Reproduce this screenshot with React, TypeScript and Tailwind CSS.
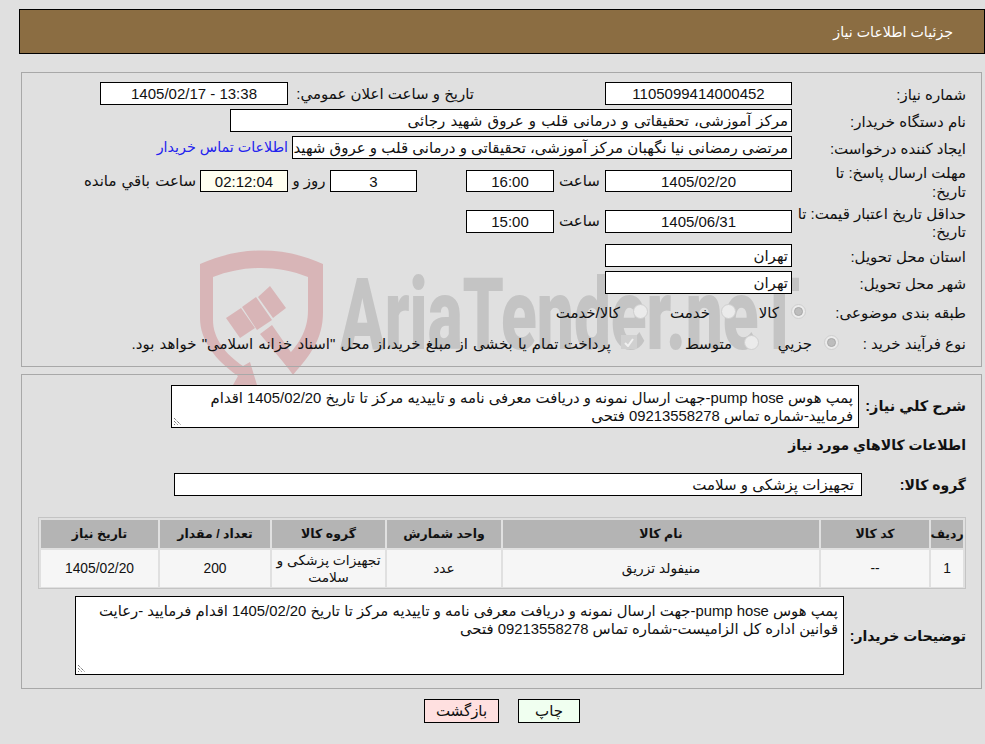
const font = "[font-family:'Liberation_Sans','DejaVu_Sans',sans-serif]";

const Field = ({
  width,
  height = "h-[23px]",
  align = "text-center",
  bg = "bg-white",
  children,
}: {
  width: string;
  height?: string;
  align?: string;
  bg?: string;
  children?: React.ReactNode;
}) => (
  <div
    className={`${width} ${height} ${align} ${bg} shrink-0 border border-black px-[3px] leading-[21px] overflow-hidden whitespace-nowrap`}
  >
    {children}
  </div>
);

const Label = ({ children }: { children: React.ReactNode }) => (
  <div className="w-[174px] shrink-0 leading-[21px] pt-[2px]">{children}</div>
);

const Radio = ({ checked = false }: { checked?: boolean }) => (
  <span className="w-[15px] h-[15px] mb-[4px] rounded-full bg-[#ebebeb] border border-[#cfcfcf] flex items-center justify-center shrink-0">
    {checked && <span className="w-[9px] h-[9px] rounded-full bg-[#bdbdbd] border border-[#a8a8a8]" />}
  </span>
);

const Grip = () => (
  <svg className="absolute left-[1px] bottom-[1px]" width="10" height="10" viewBox="0 0 10 10">
    <path d="M1 2 L8 9 M1 5 L5 9 M1 8 L2 9" stroke="#444" strokeWidth="1" strokeDasharray="1 1" />
  </svg>
);

const Watermark = () => (
  <div className="absolute left-[200px] top-[250px] w-[620px] h-[140px] pointer-events-none" dir="ltr">
    <svg className="absolute left-0 top-0" width="126" height="140" viewBox="0 0 126 140">
      <path
        d="M0 14 C40 -4 84 -4 123 14 L123 62 C123 90 110 105 93 125 L83 111 C98 95 108 82 108 60 L108 27 C78 15 44 15 13 27 L13 70 C13 88 25 104 43 116 L50 112 L57 135 L33 135 L38 126 C15 110 0 90 0 68 Z"
        fill="#d8b5b7"
      />
      <path
        d="M26 68 L41 58 L55 78 L40 88 Z M42 57 L56 47 L72 70 L57 80 Z M58 47 L70 36 L86 58 L73 68 Z M60 84 L72 75 L95 108 L88 118 Z"
        fill="#d8b5b7"
      />
    </svg>
    <div className="absolute left-[140px] top-[10px] text-[101px] leading-[110px] font-black text-[#c4c4c4] whitespace-nowrap [font-family:'Roboto',sans-serif] scale-x-[0.65] origin-left">
      AriaTender.neT
    </div>
  </div>
);

export default function App() {
  return (
    <div
      dir="rtl"
      className={`${font} relative w-[985px] h-[744px] overflow-hidden bg-[#e0e0e0] text-[15px] text-[#111] pt-[9px] pl-[19px]`}
    >
      <Watermark />
      {/* header */}
      <div className="relative h-[45px] bg-[#8b6d42] border border-black text-white text-[14.2px] pr-[31px] leading-[44px]">
        جزئیات اطلاعات نیاز
      </div>

      {/* top panel */}
      <div className="relative mt-[18px] ml-[2px] mr-[3px] h-[295px] border border-[#a8a8a8] pt-[9px] pr-[15px]">
        <div className="flex h-[23px] items-center">
          <Label>شماره نیاز:</Label>
          <Field width="w-[187px]">1105099414000452</Field>
          <div className="w-[317px] pr-[131px] pt-[2px] whitespace-nowrap">تاریخ و ساعت اعلان عمومي:</div>
          <Field width="w-[188px]">13:38 - 1405/02/17</Field>
        </div>
        <div className="flex h-[23px] items-center mt-[4px]">
          <Label>نام دستگاه خریدار:</Label>
          <Field width="w-[562px]" align="text-right">
            <span className="[word-spacing:1px]">مرکز آموزشی، تحقیقاتی و درمانی قلب و عروق شهید رجائی</span>
          </Field>
        </div>
        <div className="flex h-[23px] items-center mt-[4px]">
          <Label>ایجاد کننده درخواست:</Label>
          <Field width="w-[500px]" align="text-right">مرتضی رمضانی نیا نگهبان مرکز آموزشی، تحقیقاتی و درمانی قلب و عروق شهید</Field>
          <a className="mr-[4px] text-[14.3px] text-[#2222ee] whitespace-nowrap">اطلاعات تماس خریدار</a>
        </div>
        <div className="flex h-[36px] items-start mt-[11px]">
          <div className="w-[174px] shrink-0 leading-[19px] -mt-[7px]">
            مهلت ارسال پاسخ: تا
            <br />
            تاریخ:
          </div>
          <Field width="w-[187px]" height="h-[22px]">1405/02/20</Field>
          <div className="w-[51px] text-center leading-[22px]">ساعت</div>
          <Field width="w-[88px]" height="h-[22px]">16:00</Field>
          <div className="w-[49px]" />
          <Field width="w-[87px]" height="h-[22px]">3</Field>
          <div className="w-[42px] text-center leading-[22px]">روز و</div>
          <Field width="w-[88px]" height="h-[22px]" bg="bg-[#fffff0]">02:12:04</Field>
          <div className="mr-[4px] leading-[22px] whitespace-nowrap [word-spacing:1px]">ساعت باقي مانده</div>
        </div>
        <div className="flex h-[36px] items-start mt-[4px]">
          <div className="w-[174px] shrink-0 leading-[18px] -mt-[5px] whitespace-nowrap">
            حداقل تاریخ اعتبار قیمت: تا
            <br />
            تاریخ:
          </div>
          <Field width="w-[187px]">1405/06/31</Field>
          <div className="w-[51px] text-center leading-[22px]">ساعت</div>
          <Field width="w-[88px]">15:00</Field>
        </div>
        <div className="flex h-[23px] items-center mt-[-2px]">
          <Label>استان محل تحویل:</Label>
          <Field width="w-[187px]" align="text-right">تهران</Field>
        </div>
        <div className="flex h-[23px] items-center mt-[4px]">
          <Label>شهر محل تحویل:</Label>
          <Field width="w-[187px]" align="text-right">تهران</Field>
        </div>
        <div className="flex h-[22px] items-center mt-[8px]">
          <div className="w-[160px] shrink-0 whitespace-nowrap">طبقه بندی موضوعی:</div>
          <div className="flex items-center w-[70px] gap-[12px]"><Radio checked /><span>کالا</span></div>
          <div className="flex items-center w-[88px] gap-[11px]"><Radio /><span>خدمت</span></div>
          <div className="flex items-center gap-[13px]"><Radio /><span>کالا/خدمت</span></div>
        </div>
        <div className="flex h-[22px] items-center mt-[9px]">
          <div className="w-[127px] shrink-0 whitespace-nowrap">نوع فرآیند خرید :</div>
          <div className="flex items-center w-[80px] gap-[12px]"><Radio checked /><span>جزیي</span></div>
          <div className="flex items-center w-[122px] gap-[12px]"><Radio /><span>متوسط</span></div>
          <div className="flex items-center gap-[10px] whitespace-nowrap">
            <span className="w-[16px] h-[14px] mb-[4px] bg-[#d0d0d0] flex items-center justify-center">
              <svg width="10" height="9" viewBox="0 0 10 9">
                <path d="M1 5 L4 8 L9 1" fill="none" stroke="#f0f0f0" strokeWidth="2" />
              </svg>
            </span>
            <span className="[word-spacing:1px]">پرداخت تمام یا بخشی از مبلغ خرید،از محل "اسناد خزانه اسلامی" خواهد بود.</span>
          </div>
        </div>
      </div>

      {/* bottom panel */}
      <div className="relative mt-[7px] ml-[2px] mr-[3px] h-[315px] border border-[#a8a8a8] pt-[9px] pr-[15px]">
        <div className="flex items-center h-[44px]">
          <div className="w-[107px] shrink-0 text-[14.5px] font-bold pt-[2px]">شرح کلي نیاز:</div>
          <div className="relative w-[688px] h-[43px] shrink-0 bg-white border border-black px-[5px] text-[14.85px] leading-[18px] pt-[3px]">
            پمپ هوس pump hose-جهت ارسال نمونه و دریافت معرفی نامه و تاییدیه مرکز تا تاریخ 1405/02/20 اقدام فرمایید-شماره تماس 09213558278 فتحی
            <Grip />
          </div>
        </div>
        <div className="font-bold text-[14px] h-[20px] leading-[22px] mt-[6px]">اطلاعات کالاهاي مورد نیاز</div>
        <div className="flex items-center h-[23px] mt-[19px]">
          <div className="w-[104px] shrink-0 text-[14px] font-bold pt-[2px]">گروه کالا:</div>
          <Field width="w-[688px]" align="text-right">
            <span className="pr-[4px]">تجهیزات پزشکی و سلامت</span>
          </Field>
        </div>

        <div className="ml-[16px] mt-[21px] border border-[#c4c4c4] h-[72px] p-[2px] text-[13.8px]">
          <div className="grid grid-cols-[32px_108px_316px_114px_113px_110px_117px] gap-[2px] h-full grid-rows-[28px_37px]">
            {["ردیف", "کد کالا", "نام کالا", "واحد شمارش", "گروه کالا", "تعداد / مقدار", "تاریخ نیاز"].map((h) => (
              <div key={h} className="bg-[#b4b4b4] text-[12.5px] font-bold flex items-center justify-center whitespace-nowrap">
                {h}
              </div>
            ))}
            {["1", "--", "منیفولد تزریق", "عدد", "تجهیزات پزشکی و سلامت", "200", "1405/02/20"].map((c) => (
              <div key={c} className="bg-[#f6f6f6] flex items-center justify-center text-center leading-[17px] px-[2px]">
                {c}
              </div>
            ))}
          </div>
        </div>

        <div className="flex items-center mt-[7px] h-[79px]">
          <div className="w-[122px] shrink-0 text-[14px] font-bold pt-[2px]">توضیحات خریدار:</div>
          <div className="relative w-[769px] h-[79px] shrink-0 bg-white border border-black px-[5px] text-[14.85px] leading-[18px] pt-[5px]">
            پمپ هوس pump hose-جهت ارسال نمونه و دریافت معرفی نامه و تاییدیه مرکز تا تاریخ 1405/02/20 اقدام فرمایید -رعایت قوانین اداره کل الزامیست-شماره تماس 09213558278 فتحی
            <Grip />
          </div>
        </div>
      </div>

      {/* buttons */}
      <div className="flex justify-start gap-[19px] mt-[10px] pr-[405px]">
        <div className="w-[62px] h-[24px] bg-[#f0fff0] border border-black text-center leading-[22px]">چاپ</div>
        <div className="w-[75px] h-[24px] bg-[#ffe0e0] border border-black text-center leading-[22px]">بازگشت</div>
      </div>
    </div>
  );
}
